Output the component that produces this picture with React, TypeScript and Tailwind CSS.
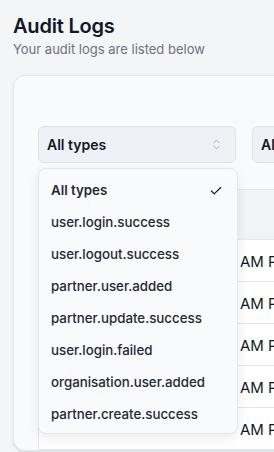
import React from "react";
import { Check, ChevronsUpDown } from "lucide-react";

const items = [
  "All types",
  "user.login.success",
  "user.logout.success",
  "partner.user.added",
  "partner.update.success",
  "user.login.failed",
  "organisation.user.added",
  "partner.create.success",
];

const rows = [0, 1, 2, 3, 4];

export default function App() {
  return (
    <div
      className="h-[452px] w-[274px] overflow-hidden bg-[#f4f5f7] pl-[13px] pt-[12px]"
      style={{ fontFamily: "Inter, 'Noto Sans', sans-serif" }}
    >
      <h1 className="text-[20px] font-semibold leading-[28px] tracking-[-0.01em] text-[#111827]">Audit Logs</h1>
      <p className="text-[13px] leading-[18px] text-[#6b7280]">Your audit logs are listed below</p>
      <div className="mt-[17px] w-[400px] rounded-xl border border-[#e6e8ec] bg-[#f9fafb] pl-[24px] pt-[50px] shadow-sm">
        <div className="flex gap-4">
          <div className="relative">
            <div className="flex h-[37px] w-[198px] items-center justify-between rounded-md border border-[#dde2ea] bg-[#eef1f6] pl-[8px] pr-[12px]">
              <span className="text-[14px] font-semibold text-[#111827]">All types</span>
              <ChevronsUpDown size={13} strokeWidth={1.5} className="text-[#9ca3af]" />
            </div>
            <div className="absolute left-0 top-[42px] z-10 w-[200px] rounded-lg border border-[#e3e6eb] bg-[#f9fafb] pb-[2px] pt-[6px] shadow-[0_4px_12px_rgba(0,0,0,0.08)]">
              {items.map((it, i) => (
                <div key={it} className="flex h-[32px] items-center justify-between pl-[12px] pr-[14px]">
                  <span
                    className={
                      "text-[13.3px] text-[#1f2937] " + (i === 0 ? "font-semibold" : "font-medium")
                    }
                  >
                    {it}
                  </span>
                  {i === 0 && <Check size={14} strokeWidth={2} className="text-[#111827]" />}
                </div>
              ))}
            </div>
          </div>
          <div className="flex h-[37px] w-[198px] items-center rounded-md border border-[#dde2ea] bg-[#eef1f6] pl-[8px]">
            <span className="text-[14px] font-semibold text-[#111827]">All users</span>
          </div>
        </div>
        <div className="mt-[26px] border-l border-t border-[#e3e6eb]">
          <div className="h-[50px] border-b border-[#e3e6eb] bg-[#f1f3f6]" />
          {rows.map((r) => (
            <div key={r} className="flex h-[42px] items-center border-b border-[#e3e6eb] bg-white pt-[3px]">
              <span className="w-[201px] shrink-0" />
              <span className="whitespace-nowrap text-[15px] text-[#111827]">AM PST</span>
            </div>
          ))}
        </div>
      </div>
    </div>
  );
}
